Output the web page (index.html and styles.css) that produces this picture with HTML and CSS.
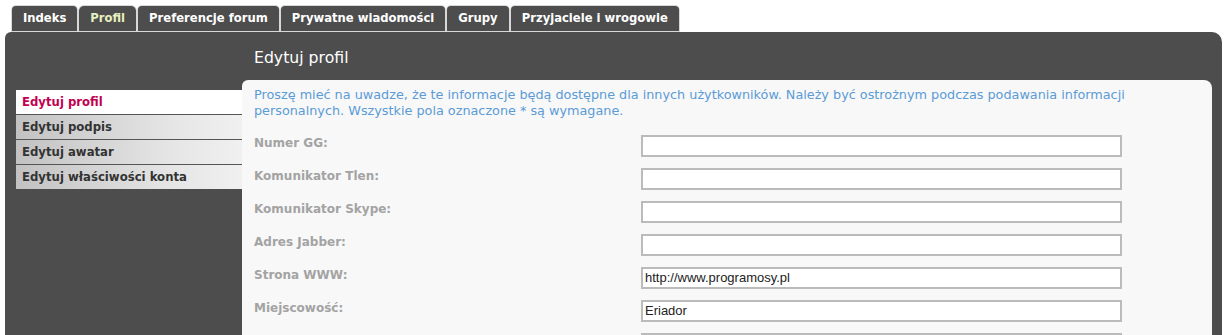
FILE: index.html
```html
<!DOCTYPE html>
<html lang="pl">
<head>
<meta charset="utf-8">
<title>Edytuj profil</title>
<link rel="stylesheet" href="styles.css">
</head>
<body>
<nav class="tabs">
  <a class="tab">Indeks</a>
  <a class="tab active">Profil</a>
  <a class="tab">Preferencje forum</a>
  <a class="tab">Prywatne wiadomości</a>
  <a class="tab">Grupy</a>
  <a class="tab">Przyjaciele i wrogowie</a>
</nav>
<div class="panel">
  <aside class="side">
    <ul class="menu">
      <li class="item current">Edytuj profil</li>
      <li class="item">Edytuj podpis</li>
      <li class="item">Edytuj awatar</li>
      <li class="item">Edytuj właściwości konta</li>
    </ul>
  </aside>
  <main class="main">
    <h2 class="title">Edytuj profil</h2>
    <div class="box">
      <p class="info">Proszę mieć na uwadze, że te informacje będą dostępne dla innych użytkowników. Należy być ostrożnym podczas podawania informacji personalnych. Wszystkie pola oznaczone * są wymagane.</p>
      <div class="form">
        <div class="row"><span class="label">Numer GG:</span><span class="field"></span></div>
        <div class="row"><span class="label">Komunikator Tlen:</span><span class="field"></span></div>
        <div class="row"><span class="label">Komunikator Skype:</span><span class="field"></span></div>
        <div class="row"><span class="label">Adres Jabber:</span><span class="field"></span></div>
        <div class="row"><span class="label">Strona WWW:</span><span class="field">http://www.programosy.pl</span></div>
        <div class="row"><span class="label">Miejscowość:</span><span class="field">Eriador</span></div>
        <div class="row"><span class="label"></span><span class="field select"><span class="arrow"></span></span></div>
      </div>
    </div>
  </main>
</div>
</body>
</html>
```

FILE: styles.css
```css
html, body {
  margin: 0;
  padding: 0;
  background: #fff;
  height: 335px;
  overflow: hidden;
}
body {
  font-family: "DejaVu Sans", Verdana, sans-serif;
}
.tabs {
  display: flex;
  gap: 2px;
  padding: 6px 0 0 12px;
  height: 25px;
}
.tab {
  display: block;
  background: #4d4d4d;
  color: #fff;
  font-weight: bold;
  font-size: 11.6px;
  line-height: 25px;
  padding: 0 11px;
  border-radius: 4px 4px 0 0;
  box-shadow: 0 0 0 1px #d8d8d8;
}
.tab.active {
  color: #e6efbf;
  border-radius: 5px 5px 0 0;
}
.panel {
  margin: 1px 2px 0 5px;
  background: #4d4d4d;
  border-radius: 6px 10px 0 0;
  height: 303px;
  display: flex;
  padding-left: 11px;
}
.side {
  width: 226px;
  flex: none;
  padding-top: 58px;
}
.menu {
  list-style: none;
  margin: 0;
  padding: 0;
}
.item {
  height: 24px;
  line-height: 24px;
  padding-left: 6px;
  font-size: 11.7px;
  font-weight: bold;
  color: #333;
  background: linear-gradient(to right, #c2c2c2, #e6e6e6 70%, #f0f0f0);
  border-top: 1px solid #555;
}
.item.current {
  background: #fff;
  color: #c2004f;
  border-top: 0;
  height: 24px;
}
.main {
  flex: 1;
  margin-right: 10px;
  display: flex;
  flex-direction: column;
}
.title {
  margin: 0;
  height: 48px;
  line-height: 52px;
  padding-left: 12px;
  color: #fff;
  font-weight: normal;
  font-size: 15.7px;
}
.box {
  flex: 1;
  background: #f8f8f8;
  border-radius: 6px 8px 0 0;
  padding: 7px 12px 0 12px;
}
.info {
  margin: 0;
  color: #5b9bd6;
  font-size: 12.8px;
  line-height: 16px;
  max-width: 900px;
}
.form {
  margin-top: 16px;
}
.row {
  display: flex;
  height: 33px;
}
.label {
  width: 387px;
  flex: none;
  font-size: 12px;
  font-weight: bold;
  color: #a3a3a3;
  line-height: 14px;
  padding-top: 1px;
}
.field {
  box-sizing: border-box;
  width: 481px;
  height: 22px;
  background: #fff;
  border: 2px solid #bbb;
  font-family: "Liberation Sans", Arial, sans-serif;
  font-size: 13px;
  color: #222;
  line-height: 18px;
  padding-left: 2px;
}
.select {
  position: relative;
}
.arrow {
  position: absolute;
  right: 0;
  top: 0;
  width: 18px;
  height: 18px;
  background: #e0e0e0;
}
```
